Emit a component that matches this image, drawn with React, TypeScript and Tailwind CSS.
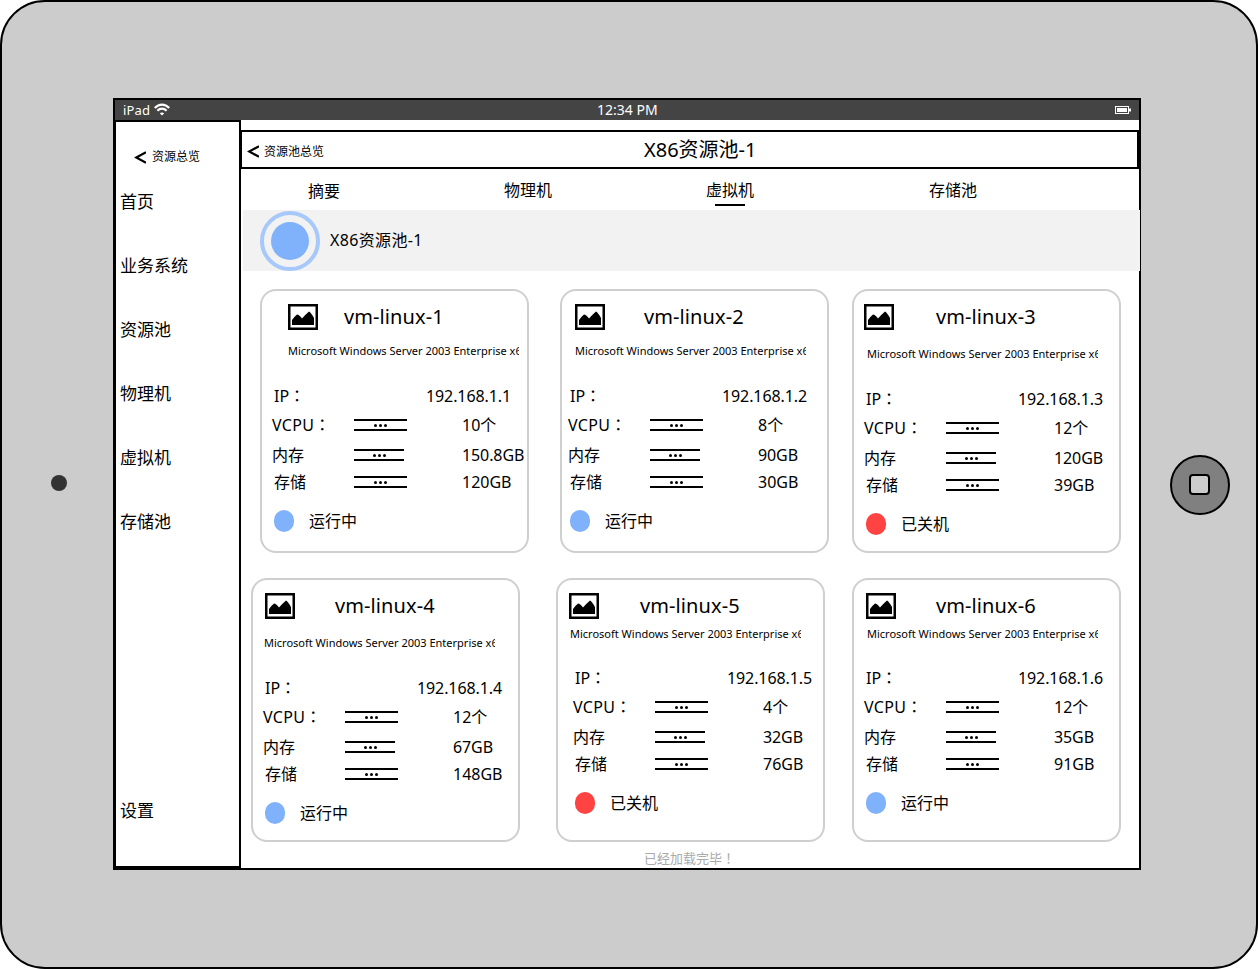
const font = "font-['Noto_Sans','Noto_Sans_CJK_SC',sans-serif]";
const tcPunct = "font-['Noto_Sans_CJK_TC',sans-serif]";

type Vm = {
  name: string;
  ip: string;
  vcpu: string;
  mem: string;
  disk: string;
  on: boolean;
  cardClass: string;
  iconClass: string;
  descClass: string;
  rowsClass: string;
};

const topRow: Vm[] = [
  { name: "vm-linux-1", ip: "192.168.1.1", vcpu: "10个", mem: "150.8GB", disk: "120GB", on: true, cardClass: "ml-[19px]", iconClass: "ml-[26px]", descClass: "ml-[26px] mt-[12px]", rowsClass: "ml-[12px] mt-[25px]" },
  { name: "vm-linux-2", ip: "192.168.1.2", vcpu: "8个", mem: "90GB", disk: "30GB", on: true, cardClass: "ml-[31px]", iconClass: "ml-[13px]", descClass: "ml-[13px] mt-[12px]", rowsClass: "ml-[8px] mt-[25px]" },
  { name: "vm-linux-3", ip: "192.168.1.3", vcpu: "12个", mem: "120GB", disk: "39GB", on: false, cardClass: "ml-[23px]", iconClass: "ml-[10px]", descClass: "ml-[13px] mt-[15px]", rowsClass: "ml-[12px] mt-[25px]" },
];

const bottomRow: Vm[] = [
  { name: "vm-linux-4", ip: "192.168.1.4", vcpu: "12个", mem: "67GB", disk: "148GB", on: true, cardClass: "ml-[10px]", iconClass: "ml-[12px]", descClass: "ml-[11px] mt-[15px]", rowsClass: "ml-[12px] mt-[25px]" },
  { name: "vm-linux-5", ip: "192.168.1.5", vcpu: "4个", mem: "32GB", disk: "76GB", on: false, cardClass: "ml-[36px]", iconClass: "ml-[11px]", descClass: "ml-[12px] mt-[6px]", rowsClass: "ml-[17px] mt-[24px]" },
  { name: "vm-linux-6", ip: "192.168.1.6", vcpu: "12个", mem: "35GB", disk: "91GB", on: true, cardClass: "ml-[27px]", iconClass: "ml-[12px]", descClass: "ml-[13px] mt-[6px]", rowsClass: "ml-[12px] mt-[24px]" },
];

const sideItems = ["首页", "业务系统", "资源池", "物理机", "虚拟机", "存储池"];

function Chevron() {
  return (
    <svg width="12" height="13" viewBox="0 0 12 13" className="shrink-0">
      <path d="M12 1.2 L2.2 6.5 L12 11.8" fill="none" stroke="#000" strokeWidth="2.2" />
    </svg>
  );
}

function PicIcon() {
  return (
    <svg width="30" height="26" viewBox="0 0 30 26" className="block">
      <rect x="1.25" y="1.25" width="27.5" height="23.5" fill="#fff" stroke="#000" strokeWidth="2.5" />
      <path d="M4 21 V16 Q6 13 9 10.5 Q11 10.5 14 14.5 Q17 11 21 7.5 Q23 8.5 26 14 V21 Z" fill="#000" />
    </svg>
  );
}

function DotsBar({ short }: { short?: boolean }) {
  return (
    <div className={`flex h-[12px] flex-col justify-between ${short ? "w-[50px]" : "w-[53px]"}`}>
      <div className="h-[2px] bg-black" />
      <div className="flex justify-center gap-[2px]">
        <span className="size-[3px] rounded-full bg-black" />
        <span className="size-[3px] rounded-full bg-black" />
        <span className="size-[3px] rounded-full bg-black" />
      </div>
      <div className="h-[2px] bg-black" />
    </div>
  );
}

function VmCard({ vm }: { vm: Vm }) {
  return (
    <div className={`box-border h-[264px] w-[269px] shrink-0 rounded-[16px] border-2 border-[#cfcfcf] bg-white pt-[13px] ${vm.cardClass}`}>
      <div className="grid h-[27px] grid-cols-[82px_1fr] items-start">
        <div className={vm.iconClass}>
          <PicIcon />
        </div>
        <div className="text-[20px] leading-[25px] tracking-[0.1px] text-black">{vm.name}</div>
      </div>
      <div className={`h-[16px] w-[231px] overflow-hidden whitespace-nowrap text-[11px] leading-[16px] text-black ${vm.descClass}`}>
        Microsoft Windows Server 2003 Enterprise x64 Edition
      </div>
      <div className={`text-[16px] leading-[24px] text-black ${vm.rowsClass}`}>
        <div className="flex h-[24px]">
          <span className="-mt-[1px] w-[152px]">IP<span className={tcPunct}>：</span></span>
          <span className="tracking-[-0.1px]">{vm.ip}</span>
        </div>
        <div className="mt-[5px] flex h-[24px] items-center">
          <span className="-mt-[2px] -ml-[2px] w-[82px] tracking-[0.3px]">VCPU<span className={tcPunct}>：</span></span>
          <div className="w-[108px]"><DotsBar /></div>
          <span>{vm.vcpu}</span>
        </div>
        <div className="mt-[6px] flex h-[24px] items-center">
          <span className="-ml-[2px] w-[82px]">内存</span>
          <div className="w-[108px]"><DotsBar short /></div>
          <span className="tracking-[-0.1px]">{vm.mem}</span>
        </div>
        <div className="mt-[3px] flex h-[24px] items-center">
          <span className="w-[80px]">存储</span>
          <div className="w-[108px]"><DotsBar /></div>
          <span>{vm.disk}</span>
        </div>
        <div className="mt-[15px] flex h-[24px] items-center gap-[15px]">
          <span className={`h-[22px] w-[20px] rounded-full ${vm.on ? "bg-[#80b1fb]" : "bg-[#ff4242]"}`} />
          <span>{vm.on ? "运行中" : "已关机"}</span>
        </div>
      </div>
    </div>
  );
}

export default function App() {
  return (
    <div className={`relative box-border h-[969px] w-[1258px] rounded-[45px] border-2 border-black bg-[#cccccc] pl-[111px] pt-[96px] ${font}`}>
      <span className="absolute left-[49px] top-[473px] size-[16px] rounded-full bg-[#333333]" />
      <div className="absolute left-[1168px] top-[453px] flex size-[60px] items-center justify-center rounded-full border-2 border-black bg-[#808080]">
        <span className="mb-[2px] mr-[2px] box-border size-[21px] rounded-[4px] border-2 border-black bg-[#cccccc]" />
      </div>

      <div className="box-border flex h-[772px] w-[1028px] flex-col border-2 border-black bg-white">
        <div className="relative flex h-[20px] shrink-0 items-center justify-between bg-[#444444] px-[8px] text-white">
          <div className="flex items-center gap-[4px]">
            <span className="text-[13px] leading-[20px] tracking-[0.2px]">iPad</span>
            <svg width="16" height="13" viewBox="0 0 16 13" fill="none" stroke="#fff" className="-mt-[2px]">
              <path d="M0.8 5 C5 0.4 11 0.4 15.2 5" strokeWidth="2.2" />
              <path d="M3.4 7.8 C6 5 10 5 12.6 7.8" strokeWidth="2.2" />
              <path d="M8 12.6 L5.8 10.2 C7 9.2 9 9.2 10.2 10.2 Z" fill="#fff" stroke="none" />
            </svg>
          </div>
          <span className="absolute left-[482px] text-[14px] leading-[20px]">12:34 PM</span>
          <svg width="16" height="8" viewBox="0 0 16 8">
            <rect x="0.5" y="0.5" width="13" height="7" fill="none" stroke="#fff" />
            <rect x="2" y="2" width="10" height="4" fill="#fff" />
            <rect x="14" y="2.5" width="2" height="3" fill="#fff" />
          </svg>
        </div>

        <div className="flex min-h-0 flex-1">
          <aside className="box-border flex h-[748px] w-[126px] shrink-0 flex-col border-y-2 border-l border-r-2 border-black pl-[4px] text-[17px] leading-[24px] text-black">
            <div className="ml-[14px] mt-[27px] flex h-[16px] items-center gap-[6px] text-[12px]">
              <Chevron />
              <span>资源总览</span>
            </div>
            <div className="mt-[25px] flex flex-col gap-[40px]">
              {sideItems.map((item) => (
                <div key={item}>{item}</div>
              ))}
            </div>
            <div className="mb-[43px] mt-auto">设置</div>
          </aside>

          <main className="flex min-w-0 flex-1 flex-col">
            <div className="relative mt-[10px] box-border flex h-[39px] items-center border-y-2 border-l border-r-2 border-black pl-[5px] text-black">
              <div className="mt-[4px] flex items-center gap-[5px]">
                <Chevron />
                <span className="text-[12px]">资源池总览</span>
              </div>
              <span className="absolute left-[402px] text-[20px]">X86资源池-1</span>
            </div>

            <nav className="flex h-[41px] text-[16px] text-black">
              <span className="ml-[67px] mt-[10px]">摘要</span>
              <span className="ml-[164px] mt-[9px]">物理机</span>
              <span className="ml-[154px] mt-[9px] flex h-[28px] flex-col items-center">
                虚拟机
                <span className="mt-auto h-[2px] w-[30px] bg-black" />
              </span>
              <span className="ml-[175px] mt-[9px]">存储池</span>
            </nav>

            <div className="ml-[2px] flex h-[61px] w-[897px] shrink-0 items-center bg-[#f2f2f2] pl-[17px] text-[16px] text-black">
              <div className="box-border flex size-[60px] items-center justify-center rounded-full border-[4px] border-[#a6c8fa]">
                <span className="size-[38px] rounded-full bg-[#80b1fb]" />
              </div>
              <span className="mb-[2px] ml-[10px] tracking-[0.35px]">X86资源池-1</span>
            </div>

            <div className="mt-[18px] flex">
              {topRow.map((vm) => (
                <VmCard key={vm.name} vm={vm} />
              ))}
            </div>
            <div className="mt-[25px] flex">
              {bottomRow.map((vm) => (
                <VmCard key={vm.name} vm={vm} />
              ))}
            </div>
            <div className="ml-[403px] mt-[7px] text-[13px] leading-[18px] text-[#aaaaaa]">已经加载完毕<span className={tcPunct}>！</span></div>
          </main>
        </div>
      </div>
    </div>
  );
}
